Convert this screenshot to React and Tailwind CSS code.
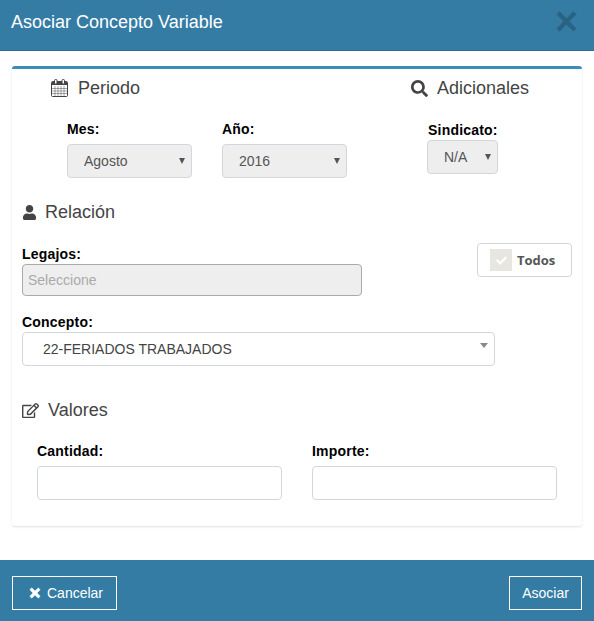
import { FaSearch, FaUser, FaRegEdit, FaTimes, FaCheck } from 'react-icons/fa';

function CalendarIcon() {
  return (
    <svg width="17" height="18" viewBox="0 0 17 18" className="text-[#444]">
      <rect x="0.5" y="2.5" width="16" height="15" rx="1" fill="none" stroke="currentColor" />
      <rect x="1" y="3" width="15" height="3" fill="currentColor" />
      <path d="M1 9.5h15M1 12h15M1 14.5h15M4 7v10M7 7v10M10 7v10M13 7v10" stroke="currentColor" strokeOpacity="0.6" strokeWidth="0.8" fill="none" />
      <rect x="3.5" y="0.5" width="2.5" height="4.5" rx="1" fill="#fff" stroke="currentColor" />
      <rect x="11" y="0.5" width="2.5" height="4.5" rx="1" fill="#fff" stroke="currentColor" />
    </svg>
  );
}

function Heading({ icon, children, className = '' }) {
  return (
    <h3 className={`flex items-center text-[18px] leading-[20px] text-[#444] ${className}`}>
      {icon}
      {children}
    </h3>
  );
}

function FieldLabel({ children, className = '' }) {
  return <label className={`block text-[14px] leading-[16px] font-bold tracking-[0.2px] text-black ${className}`}>{children}</label>;
}

function SelectBox({ value, disabled, className = '', textClass = 'pl-4' }) {
  return (
    <div className={`relative ${className}`}>
      <select
        disabled={disabled}
        defaultValue={value}
        className={`h-[34px] w-full appearance-none rounded-[4px] border border-[#d2d6de] text-[14px] text-[#555] opacity-100 ${textClass} ${disabled ? 'bg-[#eeeeee]' : 'bg-white'}`}
      >
        <option>{value}</option>
      </select>
      <span className="absolute right-[7px] top-[14px] h-0 w-0 border-x-[3.5px] border-t-[6px] border-x-transparent border-t-[#555]" />
    </div>
  );
}

export default function App() {
  return (
    <div className="flex h-[621px] w-[594px] flex-col bg-white font-['Liberation_Sans',Arial,sans-serif]">
      <header className="flex h-[51px] items-start justify-between border-b border-[#2f6f95] bg-[#357ca5] pl-[11px] pr-[16px]">
        <h2 className="pt-[12px] text-[18px] leading-[20px] text-white">Asociar Concepto Variable</h2>
        <button className="pt-[1px] text-[40px] leading-none font-bold text-black opacity-20">×</button>
      </header>

      <main className="mx-3 mt-[15px] h-[460px] rounded-[3px] border-t-[3px] border-[#3c8dbc] bg-white shadow-[0_1px_2px_rgba(0,0,0,0.12)]">
        {/* Periodo / Adicionales */}
        <div className="flex">
          <div className="w-[399px] pl-[39px] pt-[9px]">
            <Heading icon={<span className="mr-[10px]"><CalendarIcon /></span>}>Periodo</Heading>
            <div className="mt-[23px] flex gap-[30px] pl-[16px]">
              <div className="w-[125px]">
                <FieldLabel>Mes:</FieldLabel>
                <SelectBox value="Agosto" disabled className="mt-[7px]" />
              </div>
              <div className="w-[125px]">
                <FieldLabel>Año:</FieldLabel>
                <SelectBox value="2016" disabled className="mt-[7px]" />
              </div>
            </div>
          </div>
          <div className="pt-[9px]">
            <Heading icon={<FaSearch className="mr-[9px] text-[17px]" />}>Adicionales</Heading>
            <FieldLabel className="mt-[24px] ml-[17px]">Sindicato:</FieldLabel>
            <SelectBox value="N/A" disabled className="mt-[2px] ml-[16px] w-[71px]" />
          </div>
        </div>

        {/* Relación */}
        <div className="relative pl-[10px] pt-[24px]">
          <Heading icon={<FaUser className="mr-[8px] text-[15px]" />}>Relación</Heading>
          <FieldLabel className="mt-[24px]">Legajos:</FieldLabel>
          <input
            disabled
            placeholder="Seleccione"
            className="mt-[2px] block h-[32px] w-[340px] rounded-[4px] border border-[#aaaaaa] bg-[#eeeeee] pl-[5px] text-[14px] placeholder:text-[#aaaaaa]"
          />
          <FieldLabel className="mt-[18px]">Concepto:</FieldLabel>
          <div className="relative mt-[2px] w-[473px]">
            <select defaultValue="22-FERIADOS TRABAJADOS" className="h-[34px] w-full appearance-none rounded-[4px] border border-[#d2d6de] bg-white pl-[20px] text-[14px] text-[#444]">
              <option>22-FERIADOS TRABAJADOS</option>
            </select>
            <span className="absolute right-[7px] top-[11px] h-0 w-0 border-x-[4px] border-t-[5px] border-x-transparent border-t-[#888]" />
          </div>

          <button className="absolute left-[465px] top-[65px] flex h-[34px] w-[95px] items-center rounded-[4px] border border-[#d2d6de] bg-white pl-[12px] font-['Open_Sans',sans-serif] text-[13px] font-bold text-[#555]">
            <span className="mr-[5px] flex h-[22px] w-[22px] items-center justify-center bg-[#e8e6e1] text-[11px] text-white"><FaCheck /></span>
            <span className="pt-[1px]">Todos</span>
          </button>
        </div>

        {/* Valores */}
        <div className="pl-[10px] pt-[34px]">
          <Heading icon={<FaRegEdit className="mr-[9px] text-[17px]" />}>Valores</Heading>
          <div className="mt-[23px] flex gap-[30px] pl-[15px]">
            <div className="w-[245px]">
              <FieldLabel>Cantidad:</FieldLabel>
              <input className="mt-[7px] block h-[34px] w-full rounded-[4px] border border-[#d2d6de]" />
            </div>
            <div className="w-[245px]">
              <FieldLabel>Importe:</FieldLabel>
              <input className="mt-[7px] block h-[34px] w-full rounded-[4px] border border-[#d2d6de]" />
            </div>
          </div>
        </div>
      </main>

      <footer className="mt-auto flex h-[61px] items-start justify-between bg-[#357ca5] px-3 pt-4">
        <button className="flex h-[34px] w-[105px] items-center border border-white pl-[15px] text-[14px] text-white">
          <FaTimes className="mr-[5px] stroke-[30px] text-[14px]" />
          Cancelar
        </button>
        <button className="h-[34px] w-[73px] border border-white text-[14px] text-white">Asociar</button>
      </footer>
    </div>
  );
}
